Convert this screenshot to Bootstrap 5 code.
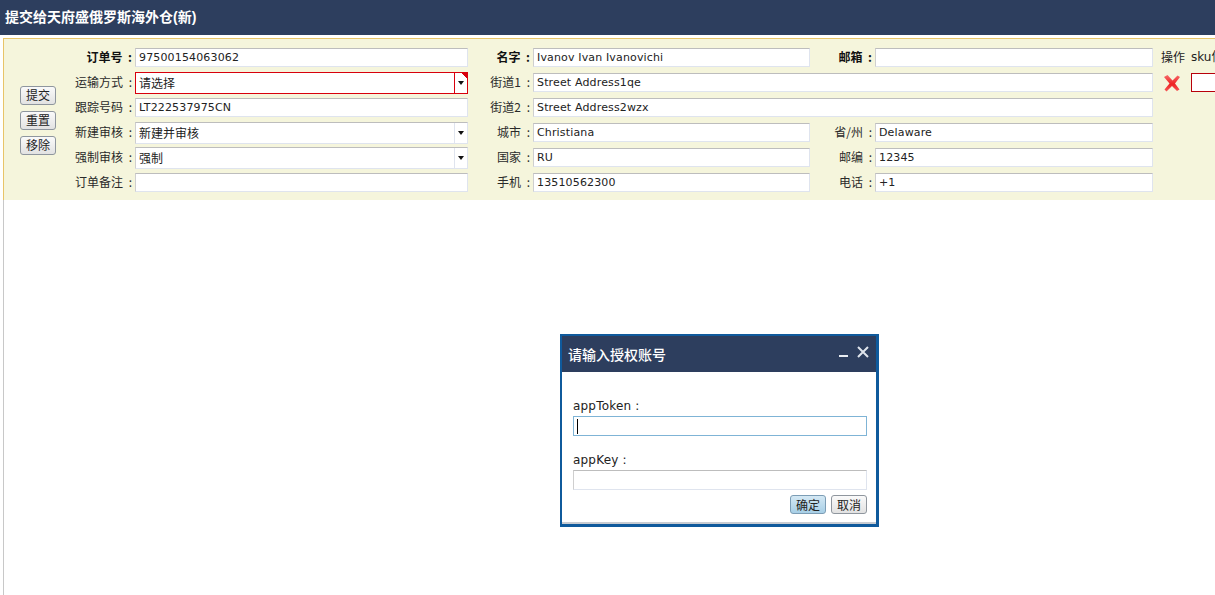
<!DOCTYPE html>
<html lang="zh">
<head>
<meta charset="utf-8">
<title>提交给天府盛俄罗斯海外仓(新)</title>
<link href="https://cdn.jsdelivr.net/npm/bootstrap@5.3.0/dist/css/bootstrap.min.css" rel="stylesheet">
<style>
html,body{height:595px;overflow:hidden;background:#fff}
body{font-family:"DejaVu Sans","Noto Sans CJK SC",sans-serif;font-size:12px;color:#222;line-height:1.2}
.top-bar{height:35px;background:#2d3e5e;color:#fff;font-size:14px;font-weight:700;padding-left:5px;font-family:"Liberation Sans","Noto Sans CJK SC",sans-serif}
.work-area{margin:3px 0 0 3px;height:557px;border-left:1px solid #c8c8c8}
.order-panel{margin-left:-1px;height:162px;background:#f5f5dc;border-top:1px solid #e8c468;border-left:1px solid #e8c468;padding:6px 0 0 16px;width:1212px;overflow:hidden}
.order-grid{display:grid;grid-template-columns:36px 79px 333px 65px 277px 65px 278px 8px 30px 60px;grid-auto-rows:25px;align-items:center}
.act-col{grid-column:1;grid-row:1/span 6;gap:6px}
.act-btn{width:36px;height:19px;padding:0;font-size:12px;line-height:16px;border:1px solid #8f969e;border-radius:3px;color:#222;background:linear-gradient(#fafafa,#e2e2e2);font-family:"Noto Sans CJK SC",sans-serif}
.act-btn.is-primary{background:linear-gradient(#d4e8f4,#a7cfe6);border-color:#7c9db5}
.f-label{text-align:right;padding-right:3px;word-spacing:3px;white-space:nowrap;font-family:"Noto Sans CJK SC",sans-serif;color:#2a2a2a}
.f-label.strong{font-weight:700;color:#111}
.f-input.form-control{height:19px;min-height:0;padding:0 3px;font-size:11px;letter-spacing:.15px;line-height:17px;border-radius:0;color:#222;background:#fff;border:1px solid #dfe4ee;border-top-color:#bdbdbd;border-left-color:#cfcfcf;box-shadow:none}
.f-input.zh.form-control{font-family:"Noto Sans CJK SC",sans-serif;font-size:12px;letter-spacing:0}
.f-select{height:22px;background:#fff;border:1px solid #dfe4ee;border-top-color:#bdbdbd;border-left-color:#cfcfcf}
.f-select .f-input.form-control{border:0;height:20px;flex:1;min-width:0}
.drop-arrow{width:13px;border-left:1px solid #dfe4ee;position:relative;flex:none}
.drop-arrow::after{content:"";position:absolute;left:3px;top:8px;border:3.5px solid transparent;border-top:4px solid #111;border-bottom:0}
.f-select.bad{border:1px solid #d8000c}
.f-select.bad .drop-arrow{border-left:1px solid #d8000c;background:linear-gradient(225deg,#d8000c 4px,transparent 4px)}
.op-head{font-family:"Noto Sans CJK SC",sans-serif}
.sku-input.form-control{width:60px;height:19px;min-height:0;border-radius:0;border:1px solid #b8000a;padding:0;background:#fff}
.del-icon{margin-left:2px;display:block}
.auth-win{position:absolute;left:560px;top:334px;width:319px;height:193px;border:3px solid #0f5a9c;border-top-width:2px;border-left-width:2px;background:#fff;box-shadow:inset 0 -2px 0 #c8ccd2}
.auth-head{height:36px;background:#2d3e5e;color:#fff;font-size:14px;font-weight:500;padding-left:6px;font-family:"Noto Sans CJK SC",sans-serif}
.win-ctl{position:absolute;display:block}
.win-min{left:277px;top:18px}
.win-close{left:295px;top:10px}
.auth-body{padding:26px 9px 0 11px}
.auth-label{height:18px;font-family:"DejaVu Sans","Noto Sans CJK SC",sans-serif;font-size:12px;letter-spacing:.2px;display:block;margin:0;line-height:16px}
.auth-input.form-control{height:20px;min-height:0;border-radius:0;padding:0 3px;background:#fff;border:1px solid #dfe4ee;border-top-color:#bdbdbd;border-left-color:#cfcfcf;box-shadow:none}
.auth-input.is-on.form-control{border:1px solid #7fb4d6}
.auth-gap{height:16px}
.caret-mark{position:absolute;left:15px;top:83px;width:1px;height:15px;background:#000}
.auth-foot{gap:5px;margin-top:5px}
</style>
</head>
<body>
<div class="top-bar d-flex align-items-center">提交给天府盛俄罗斯海外仓(新)</div>
<div class="work-area">
  <div class="order-panel">
    <div class="order-grid">
      <div class="act-col d-flex flex-column justify-content-center">
        <button type="button" class="btn act-btn">提交</button>
        <button type="button" class="btn act-btn">重置</button>
        <button type="button" class="btn act-btn">移除</button>
      </div>

      <div class="f-label strong">订单号 :</div>
      <input class="form-control f-input" value="97500154063062">
      <div class="f-label strong">名字 :</div>
      <input class="form-control f-input" value="Ivanov Ivan Ivanovichi">
      <div class="f-label strong">邮箱 :</div>
      <input class="form-control f-input" value="">
      <div></div>
      <div class="op-head">操作</div>
      <div>sku信息</div>

      <div class="f-label" style="grid-column:2">运输方式 :</div>
      <div class="f-select bad d-flex"><input class="form-control f-input zh" value="请选择"><span class="drop-arrow"></span></div>
      <div class="f-label">街道1 :</div>
      <input class="form-control f-input" style="grid-column:span 3" value="Street Address1qe">
      <div></div>
      <svg class="del-icon" width="18" height="18" viewBox="0 0 18 18" aria-hidden="true"><defs><linearGradient id="delGrad" x1="0" y1="0" x2="0" y2="1"><stop offset="0" stop-color="#f76a6a"/><stop offset=".55" stop-color="#ee2222"/><stop offset="1" stop-color="#f55a5a"/></linearGradient></defs><path d="M1 3 L4.5 1 L9.5 6.5 L14.5 1.5 L17 3 L12 9.5 L16.5 15.5 L14 17 L9 12 L3.5 17.5 L1.5 15.5 L6.5 9.5 Z" fill="url(#delGrad)"/></svg>
      <input class="form-control sku-input">

      <div class="f-label" style="grid-column:2">跟踪号码 :</div>
      <input class="form-control f-input" value="LT222537975CN">
      <div class="f-label">街道2 :</div>
      <input class="form-control f-input" style="grid-column:span 3" value="Street Address2wzx">

      <div class="f-label" style="grid-column:2">新建审核 :</div>
      <div class="f-select d-flex"><input class="form-control f-input zh" value="新建并审核"><span class="drop-arrow"></span></div>
      <div class="f-label">城市 :</div>
      <input class="form-control f-input" value="Christiana">
      <div class="f-label">省/州 :</div>
      <input class="form-control f-input" value="Delaware">

      <div class="f-label" style="grid-column:2">强制审核 :</div>
      <div class="f-select d-flex"><input class="form-control f-input zh" value="强制"><span class="drop-arrow"></span></div>
      <div class="f-label">国家 :</div>
      <input class="form-control f-input" value="RU">
      <div class="f-label">邮编 :</div>
      <input class="form-control f-input" value="12345">

      <div class="f-label" style="grid-column:2">订单备注 :</div>
      <input class="form-control f-input" value="">
      <div class="f-label">手机 :</div>
      <input class="form-control f-input" value="13510562300">
      <div class="f-label">电话 :</div>
      <input class="form-control f-input" value="+1">
    </div>
  </div>
</div>

<div class="auth-win">
  <div class="auth-head d-flex align-items-center">请输入授权账号</div>
  <svg class="win-ctl win-min" width="10" height="4" viewBox="0 0 10 4" aria-hidden="true"><rect x="0" y="1" width="9" height="2" fill="#e8ecf2"/></svg>
  <svg class="win-ctl win-close" width="12" height="12" viewBox="0 0 12 12" aria-hidden="true"><path d="M1 1 L11 11 M11 1 L1 11" stroke="#dfe4ec" stroke-width="2"/></svg>
  <div class="auth-body">
    <label class="auth-label">appToken :</label>
    <input class="form-control auth-input is-on">
    <span class="caret-mark"></span>
    <div class="auth-gap"></div>
    <label class="auth-label">appKey :</label>
    <input class="form-control auth-input">
    <div class="auth-foot d-flex justify-content-end">
      <button type="button" class="btn act-btn is-primary">确定</button>
      <button type="button" class="btn act-btn">取消</button>
    </div>
  </div>
</div>
<script src="https://cdn.jsdelivr.net/npm/bootstrap@5.3.0/dist/js/bootstrap.bundle.min.js"></script>
</body>
</html>
